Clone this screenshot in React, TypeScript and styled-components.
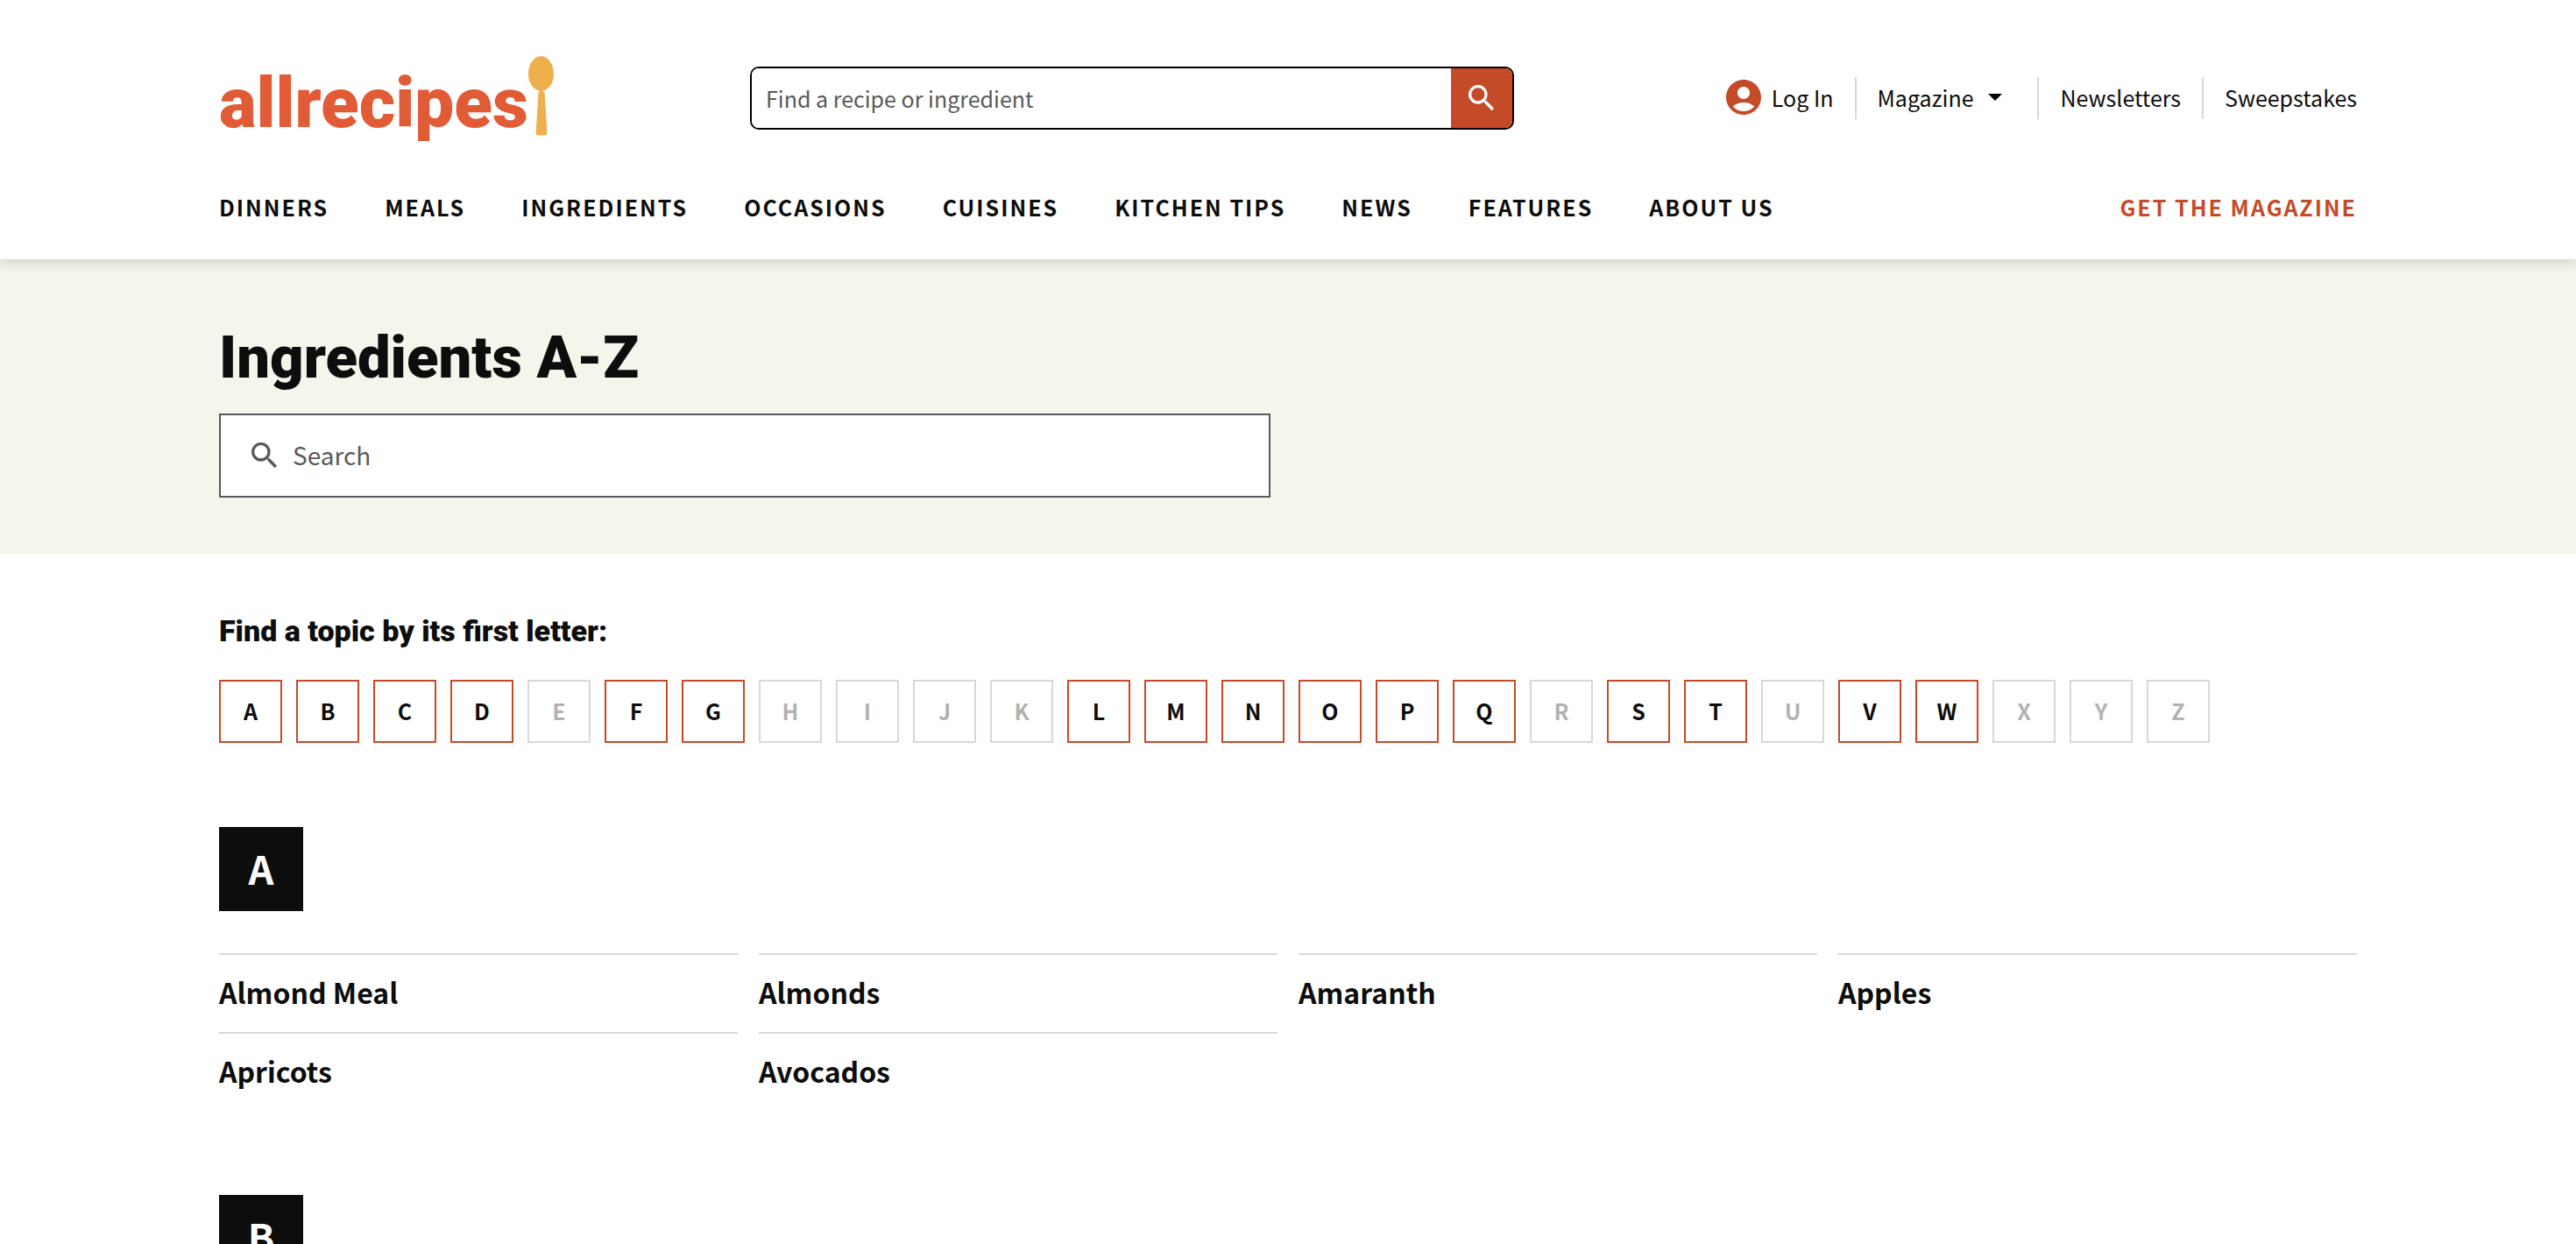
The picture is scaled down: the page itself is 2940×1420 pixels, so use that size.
import React from 'react';
import styled, { createGlobalStyle } from 'styled-components';
import { MdSearch, MdAccountCircle } from 'react-icons/md';

const ink = '#0d0d0d';
const brand = '#c54b28';
const rule = '#d8d8d8';
const muted = '#595959';
const bodyFont = "'Noto Sans CJK SC', 'Noto Sans', sans-serif";
const displayFont = "Roboto, 'Open Sans', sans-serif";

const GlobalStyle = createGlobalStyle`
  *, *::before, *::after { box-sizing: border-box; }
  body {
    margin: 0;
    background: #fff;
    color: ${ink};
    font-family: ${bodyFont};
    font-size: 25px;
    line-height: 36px;
  }
  a { color: inherit; text-decoration: none; }
  button, input { font: inherit; color: inherit; }
  ul { list-style: none; margin: 0; padding: 0; }
  h1, h2 { margin: 0; }
`;

const Page = styled.div`
  height: 100vh;
  overflow: hidden;
`;

const Container = styled.div`
  max-width: 2520px;
  margin: 0 auto;
  padding: 0 40px;
`;

const Header = styled.header`
  position: relative;
  background: #fff;
  padding: 64px 0 42px;
  box-shadow: 0 0 16px rgba(0, 0, 0, 0.24);
`;

const TopBar = styled.div`
  display: grid;
  grid-template-columns: 606px minmax(0, 872px) 1fr;
  align-items: start;
`;

const Logo = styled.a`
  display: flex;
  align-items: flex-start;
  height: 96px;
  color: #e15b36;
  font-family: ${displayFont};
  font-size: 80px;
  font-weight: 900;
  line-height: 108px;
`;

const SearchForm = styled.form`
  display: flex;
  height: 72px;
  margin-top: 12px;
  border: 2px solid #000;
  border-radius: 10px;
  overflow: hidden;
`;

const SearchInput = styled.input`
  flex: 1;
  min-width: 0;
  border: 0;
  outline: 0;
  padding: 0 16px;
  background: #fff;
  &::placeholder { color: ${muted}; opacity: 1; }
`;

const SearchButton = styled.button`
  display: flex;
  align-items: center;
  justify-content: center;
  width: 70px;
  border: 0;
  padding: 0;
  background: ${brand};
  color: #fff;
  font-size: 40px;
`;

const Utility = styled.ul`
  display: flex;
  justify-content: flex-end;
  margin-top: 24px;
`;

const UtilityItem = styled.li`
  display: flex;
  align-items: center;
  height: 48px;
  padding: 0 24px 2px;
  border-left: 2px solid ${rule};
  &:first-child { border-left: 0; }
  &:last-child { padding-right: 0; }
`;

const UtilityLink = styled.a`
  display: flex;
  align-items: center;
  gap: 12px;
  & svg { font-size: 48px; color: ${brand}; margin: 0 -4px; }
`;

const MenuButton = styled.button`
  display: flex;
  align-items: center;
  gap: 17px;
  border: 0;
  background: none;
  padding: 0 16px 0 0;
`;

const NavBar = styled.nav`
  display: flex;
  justify-content: space-between;
  margin-top: 58px;
  font-weight: 700;
  letter-spacing: 2px;
  text-transform: uppercase;
`;

const NavList = styled.ul`
  display: flex;
  gap: 64px;
`;

const MagazineLink = styled.a`
  && { color: ${brand}; }
`;

const Hero = styled.section`
  background: #f5f5eb;
  padding: 72px 0 64px;
`;

const Title = styled.h1`
  font-family: ${displayFont};
  font-size: 67px;
  font-weight: 900;
  line-height: 80px;
`;

const FilterBox = styled.label`
  display: flex;
  align-items: center;
  gap: 12px;
  max-width: 1200px;
  height: 96px;
  margin-top: 24px;
  padding: 0 30px;
  border: 2px solid ${muted};
  background: #fff;
  color: ${muted};
  font-size: 28px;
  & svg { font-size: 40px; flex: none; }
`;

const FilterInput = styled.input`
  flex: 1;
  border: 0;
  outline: 0;
  padding: 0 0 2px;
  background: none;
  &::placeholder { color: ${muted}; opacity: 1; }
`;

const Main = styled.main`
  padding-top: 64px;
`;

const Subtitle = styled.h2`
  font-family: ${displayFont};
  font-size: 34px;
  font-weight: 900;
  line-height: 48px;
`;

const LetterList = styled.ul`
  display: flex;
  flex-wrap: wrap;
  gap: 16px;
  margin-top: 32px;
`;

const LetterLink = styled.a<{ $empty?: boolean }>`
  display: flex;
  align-items: center;
  justify-content: center;
  width: 72px;
  height: 72px;
  padding-bottom: 2px;
  border: 2px solid ${p => (p.$empty ? rule : brand)};
  && { color: ${p => (p.$empty ? '#b2b2b2' : ink)}; }
  font-weight: 700;
`;

const Group = styled.section`
  margin-top: 96px;
`;

const GroupLetter = styled.h2`
  display: flex;
  align-items: center;
  justify-content: center;
  width: 96px;
  height: 96px;
  padding-bottom: 2px;
  background: ${ink};
  color: #fff;
  font-size: 45px;
  font-weight: 700;
`;

const TopicGrid = styled.ul`
  display: grid;
  grid-template-columns: repeat(4, minmax(0, 1fr));
  column-gap: 24px;
  margin-top: 48px;
`;

const Topic = styled.li`
  padding: 18px 0 22px;
  border-top: 2px solid ${rule};
  font-size: 32px;
  font-weight: 700;
  line-height: 48px;
`;

const Spoon = () => (
  <svg width="29" height="92" viewBox="0 0 29 92" fill="#edb04d" aria-hidden="true">
    <path d="M14.500 0C22.500 0 29 9 29 20.500C29 31 23 38.500 17 39.300V41H18.500L21.500 88.500Q21.500 90 19.500 90.200Q15 91 10.500 90.200Q8.500 90 8.600 88.500L11.500 41H12.500V39.300C6 38.500 0 31 0 20.500C0 9 6.500 0 14.500 0Z" />
  </svg>
);

const Caret = () => (
  <svg width="16" height="8" viewBox="0 0 16 8" fill="#000" aria-hidden="true">
    <path d="M0 0H16L8 8Z" />
  </svg>
);

const navItems = ['Dinners', 'Meals', 'Ingredients', 'Occasions', 'Cuisines', 'Kitchen Tips', 'News', 'Features', 'About Us'];
const letters = 'ABCDEFGHIJKLMNOPQRSTUVWXYZ'.split('');
const emptyLetters = new Set('EHIJKRUXYZ');
const groups = [
  { letter: 'A', topics: ['Almond Meal', 'Almonds', 'Amaranth', 'Apples', 'Apricots', 'Avocados'] },
  { letter: 'B', topics: [] as string[] },
];

export default function App() {
  return (
    <Page>
      <GlobalStyle />
      <Header>
        <Container>
          <TopBar>
            <Logo href="#home">allrecipes<Spoon /></Logo>
            <SearchForm role="search" onSubmit={e => e.preventDefault()}>
              <SearchInput type="text" aria-label="Find a recipe or ingredient" placeholder="Find a recipe or ingredient" />
              <SearchButton type="submit" aria-label="Search"><MdSearch /></SearchButton>
            </SearchForm>
            <Utility>
              <UtilityItem><UtilityLink href="#login"><MdAccountCircle />Log In</UtilityLink></UtilityItem>
              <UtilityItem><MenuButton type="button">Magazine<Caret /></MenuButton></UtilityItem>
              <UtilityItem><UtilityLink href="#newsletters">Newsletters</UtilityLink></UtilityItem>
              <UtilityItem><UtilityLink href="#sweepstakes">Sweepstakes</UtilityLink></UtilityItem>
            </Utility>
          </TopBar>
          <NavBar>
            <NavList>
              {navItems.map(item => <li key={item}><a href="#nav">{item}</a></li>)}
            </NavList>
            <MagazineLink href="#magazine">Get the Magazine</MagazineLink>
          </NavBar>
        </Container>
      </Header>
      <Hero>
        <Container>
          <Title>Ingredients A-Z</Title>
          <FilterBox>
            <MdSearch />
            <FilterInput type="text" aria-label="Search" placeholder="Search" />
          </FilterBox>
        </Container>
      </Hero>
      <Main>
        <Container>
          <Subtitle>Find a topic by its first letter:</Subtitle>
          <LetterList>
            {letters.map(l => (
              <li key={l}>
                <LetterLink $empty={emptyLetters.has(l)} href={emptyLetters.has(l) ? undefined : `#${l}`}>{l}</LetterLink>
              </li>
            ))}
          </LetterList>
          {groups.map(g => (
            <Group key={g.letter} id={g.letter}>
              <GroupLetter>{g.letter}</GroupLetter>
              {g.topics.length > 0 && (
                <TopicGrid>
                  {g.topics.map(t => <Topic key={t}><a href="#topic">{t}</a></Topic>)}
                </TopicGrid>
              )}
            </Group>
          ))}
        </Container>
      </Main>
    </Page>
  );
}
